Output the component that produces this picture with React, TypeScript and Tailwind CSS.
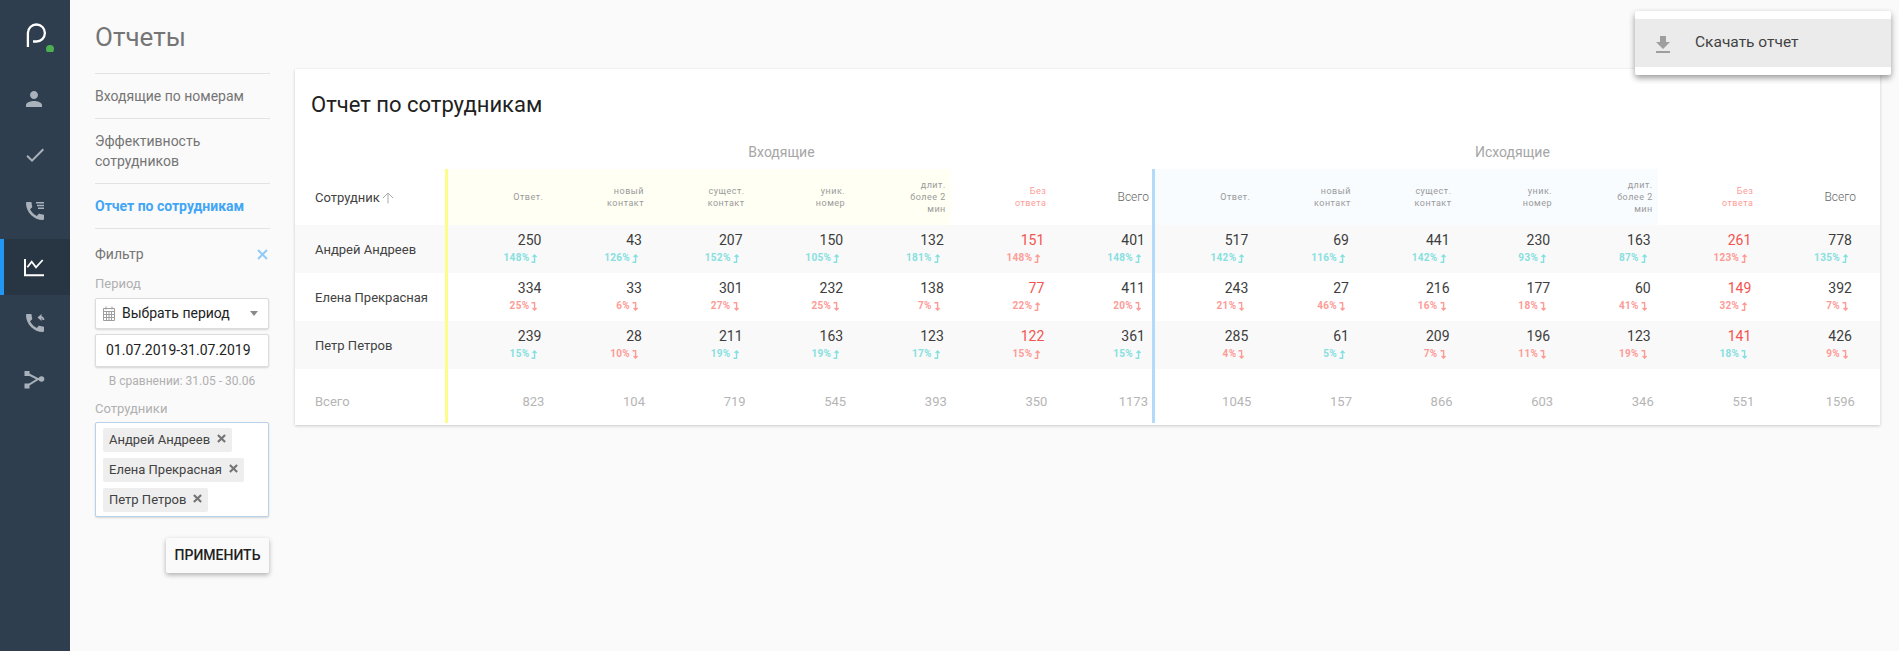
import React from "react";

type Cell = [string, string, boolean, boolean?, boolean?];

const inbound: Cell[][] = [
  [["250", "148%", true], ["43", "126%", true], ["207", "152%", true], ["150", "105%", true], ["132", "181%", true], ["151", "148%", true, true], ["401", "148%", true]],
  [["334", "25%", false], ["33", "6%", false], ["301", "27%", false], ["232", "25%", false], ["138", "7%", false], ["77", "22%", true, true], ["411", "20%", false]],
  [["239", "15%", true], ["28", "10%", false], ["211", "19%", true], ["163", "19%", true], ["123", "17%", true], ["122", "15%", true, true], ["361", "15%", true]],
];
const outbound: Cell[][] = [
  [["517", "142%", true], ["69", "116%", true], ["441", "142%", true], ["230", "93%", true], ["163", "87%", true], ["261", "123%", true, true], ["778", "135%", true]],
  [["243", "21%", false], ["27", "46%", false], ["216", "16%", false], ["177", "18%", false], ["60", "41%", false], ["149", "32%", true, true], ["392", "7%", false]],
  [["285", "4%", false], ["61", "5%", true], ["209", "7%", false], ["196", "11%", false], ["123", "19%", false], ["141", "18%", false, true, true], ["426", "9%", false]],
];
const names = ["Андрей Андреев", "Елена Прекрасная", "Петр Петров"];
const totalsIn = ["823", "104", "719", "545", "393", "350", "1173"];
const totalsOut = ["1045", "157", "866", "603", "346", "551", "1596"];
const headers = [["Ответ."], ["новый", "контакт"], ["сущест.", "контакт"], ["уник.", "номер"], ["длит.", "более 2", "мин"]];

const GRID = "grid grid-cols-[150px_103.4px_repeat(6,100.6px)_103.4px_repeat(6,100.6px)]";

function Trend({ up }: { up: boolean }) {
  return (
    <svg width="7" height="9" viewBox="0 0 7 9" className="ml-[2px] inline-block" fill="none" stroke="currentColor" strokeWidth="1.4">
      {up ? <path d="M0.5 8.3H3.6V1.5M1.6 3L3.6 1L5.6 3" /> : <path d="M0.5 0.7H3.6V7.5M1.6 6L3.6 8L5.6 6" />}
    </svg>
  );
}

function ValueCell({ c, first, bar }: { c: Cell; first?: boolean; bar?: string }) {
  const [v, p, up, redVal, forceTeal] = c;
  const red = !forceTeal && (!up || redVal === true);
  return (
    <div className={`flex flex-col items-end pt-[5px] pr-[7px] ${first ? `border-l-[3px] ${bar}` : ""}`}>
      <div className={`text-[14px] leading-[20px] ${redVal ? "text-[#f4544f]" : "text-[#3d3d3d]"}`}>{v}</div>
      <div className={`mt-[1px] flex items-center pr-[3px] text-[10px] leading-[14px] font-bold tracking-[0.3px] ${red ? "text-[#fd9c97]" : "text-[#87e0e0]"}`}>
        {p}
        <Trend up={up} />
      </div>
    </div>
  );
}

function Head({ lines, tint, first, bar }: { lines: string[]; tint: string; first?: boolean; bar?: string }) {
  return (
    <div className={`flex flex-col items-end justify-center pr-[5px] text-[9px] leading-[12px] tracking-[0.5px] text-[#9a9a9a] ${tint} ${first ? `border-l-[3px] ${bar}` : ""}`}>
      {lines.map((l) => (
        <div key={l}>{l}</div>
      ))}
    </div>
  );
}

function HeadGroup({ tint, bar }: { tint: string; bar: string }) {
  return (
    <>
      {headers.map((h, i) => (
        <Head key={i} lines={h} tint={tint} first={i === 0} bar={bar} />
      ))}
      <div className="flex flex-col items-end justify-center pr-[5px] text-[9px] leading-[12px] tracking-[0.5px] text-[#fd9c97]">
        <div>Без</div>
        <div>ответа</div>
      </div>
      <div className="flex items-center justify-end pr-[3px] text-[12px] font-light text-[#666666]">Всего</div>
    </>
  );
}

const Ic = ({ d }: { d: string }) => (
  <svg width="24" height="24" viewBox="0 0 24 24" fill="#a9b1ba">
    <path d={d} />
  </svg>
);

const PHONE = "M20.01 15.38c-1.23 0-2.42-.2-3.53-.56-.35-.12-.74-.03-1.01.24l-1.57 1.97c-2.83-1.35-5.48-3.9-6.89-6.83l1.95-1.66c.27-.28.35-.67.24-1.02-.37-1.11-.56-2.3-.56-3.53 0-.54-.45-.99-.99-.99H4.19C3.65 3 3 3.24 3 3.99 3 13.28 10.73 21 20.01 21c.71 0 .99-.63.99-1.18v-3.45c0-.54-.45-.99-.99-.99z";

function Sidebar() {
  return (
    <aside className="flex w-[70px] shrink-0 flex-col bg-[#2f3e4e]">
      <div className="flex h-[71px] items-start justify-center pt-[20px]">
        <svg width="40" height="32" viewBox="0 0 40 32" fill="none">
          <path d="M12.9 27V13A8.5 8.5 0 1 1 21.3 21.5H18" stroke="#ffffff" strokeWidth="2.3" />
          <circle cx="35" cy="29" r="4" fill="#4caf50" />
        </svg>
      </div>
      <div className="flex h-[56px] items-center justify-center pr-[2px]">
        <Ic d="M12 12c2.21 0 4-1.79 4-4s-1.79-4-4-4-4 1.79-4 4 1.79 4 4 4zm0 2c-2.67 0-8 1.34-8 4v2h16v-2c0-2.66-5.33-4-8-4z" />
      </div>
      <div className="flex h-[56px] items-center justify-center">
        <Ic d="M9 16.17L4.83 12l-1.42 1.41L9 19 21 7l-1.41-1.41z" />
      </div>
      <div className="flex h-[56px] items-center justify-center pr-[1px]">
        <svg width="24" height="24" viewBox="0 0 24 24" fill="#a9b1ba">
          <path d={PHONE} />
          <path d="M13 3h8v1.6h-8zM14 5.7h7v1.6h-7zM15 8.4h6V10h-6z" />
        </svg>
      </div>
      <div className="flex h-[56px] items-center border-l-[4px] border-[#2196f3] bg-[#283644] pl-[18px]">
        <svg width="24" height="24" viewBox="0 0 24 24" fill="none" stroke="#ffffff" strokeWidth="2">
          <path d="M3 4v16.2h19" />
          <path d="M5.3 12.3l4.4-5.6 4.3 5.6L20.7 5" strokeWidth="1.8" />
        </svg>
      </div>
      <div className="flex h-[56px] items-center justify-center pr-[1px]">
        <svg width="24" height="24" viewBox="0 0 24 24" fill="#a9b1ba">
          <path d={PHONE} />
          <path d="M14.5 6.5L18.5 3v2.3c1.8.3 2.8 1.6 2.8 3.7h-1.9c0-1.2-.3-1.8-.9-1.9V10z" />
        </svg>
      </div>
      <div className="flex h-[56px] items-center justify-center">
        <svg width="24" height="24" viewBox="0 0 24 24" fill="#a9b1ba" stroke="#a9b1ba">
          <path d="M4 6.5L15 12L4 19M15 12h3" fill="none" strokeWidth="2" />
          <rect x="1.5" y="4" width="5" height="5" strokeWidth="0" />
          <rect x="1.5" y="16.5" width="5" height="5" strokeWidth="0" />
          <circle cx="18.5" cy="12" r="2.8" strokeWidth="0" />
        </svg>
      </div>
    </aside>
  );
}

function Chip({ label }: { label: string }) {
  return (
    <div className="flex h-[24px] items-center rounded-[2px] bg-[#eeeeee] pr-[6px] pl-[6px] text-[13px] text-[#424242]">
      {label}
      <svg width="9" height="9" viewBox="0 0 10 10" className="mb-[4px] ml-[7px]" stroke="#757575" strokeWidth="2.4">
        <path d="M1 1l8 8M9 1l-8 8" />
      </svg>
    </div>
  );
}

function Filters() {
  return (
    <nav className="mt-[4px] w-[175px] shrink-0 text-[14px] text-[#757575]">
      <div className="border-y border-[#e3e3e3] py-[14px] leading-[16px]">Входящие по номерам</div>
      <div className="border-b border-[#e3e3e3] py-[12px] leading-[20px]">
        Эффективность
        <br />
        сотрудников
      </div>
      <div className="border-b border-[#e3e3e3] py-[14px] leading-[16px] font-bold text-[#42a5f5]">Отчет по сотрудникам</div>
      <div className="mt-[16px] flex items-center justify-between pr-[2px] leading-[18px]">
        <span>Фильтр</span>
        <svg width="11" height="11" viewBox="0 0 11 11" stroke="#90caf9" strokeWidth="2">
          <path d="M1 1l9 9M10 1l-9 9" />
        </svg>
      </div>
      <div className="mt-[14px] text-[13px] leading-[14px] text-[#b0b0b0]">Период</div>
      <div className="mt-[7px] flex h-[31px] w-[174px] items-center rounded-[2px] border border-[#dcdcdc] bg-white pr-[10px] pl-[6px] text-[14px] text-[#222222] shadow-[0_1px_2px_rgba(0,0,0,0.15)]">
        <svg width="14" height="15" viewBox="0 0 14 15" fill="none" stroke="#9e9e9e" strokeWidth="1">
          <path d="M1.5 2.5h11v12h-11zM1.5 5.5h11M1.5 8.5h11M1.5 11.5h11M4.5 5.5v9M7 5.5v9M9.5 5.5v9M4 0.5v3M10 0.5v3" />
        </svg>
        <span className="ml-[6px] flex-1">Выбрать период</span>
        <svg width="8" height="5" viewBox="0 0 8 5" fill="#8a8a8a">
          <path d="M0 0h8L4 5z" />
        </svg>
      </div>
      <div className="mt-[5px] flex h-[33px] w-[174px] items-center rounded-[2px] border border-[#dcdcdc] bg-white pl-[10px] text-[14px] text-[#222222] shadow-[0_1px_2px_rgba(0,0,0,0.15)]">
        01.07.2019-31.07.2019
      </div>
      <div className="mt-[7px] w-[174px] text-center text-[12px] leading-[14px] text-[#b0b0b0]">В сравнении: 31.05 - 30.06</div>
      <div className="mt-[14px] text-[13px] leading-[14px] text-[#b0b0b0]">Сотрудники</div>
      <div className="mt-[6px] flex h-[95px] w-[174px] flex-col items-start gap-[6px] rounded-[2px] border border-[#b9d3ea] bg-white pt-[5px] pl-[7px] shadow-[0_1px_2px_rgba(0,0,0,0.15)]">
        {names.map((n) => (
          <Chip key={n} label={n} />
        ))}
      </div>
      <div className="mt-[21px] flex justify-end">
        <button className="mr-[1px] h-[35px] w-[103px] rounded-[2px] bg-[#fafafa] text-[14px] font-medium text-[#212121] shadow-[0_2px_5px_rgba(0,0,0,0.3)]">
          ПРИМЕНИТЬ
        </button>
      </div>
    </nav>
  );
}

function Report() {
  const rowBgs = ["bg-[#f9f9f9]", "bg-white", "bg-[#f9f9f9]"];
  return (
    <section className="ml-[25px] h-[356px] w-[1585px] shrink-0 bg-white shadow-[0_1px_3px_rgba(0,0,0,0.2)]">
      <h2 className="pt-[21px] pl-[16px] text-[22px] leading-[30px] text-[#212121]">Отчет по сотрудникам</h2>
      <div className={`${GRID} mt-[12px] h-[37px] items-center pt-[3px] text-[14px] text-[#a6a6a6]`}>
        <div />
        <div className="col-span-7 pr-[34px] text-center">Входящие</div>
        <div className="col-span-7 pl-[14px] text-center">Исходящие</div>
      </div>
      <div className={`${GRID} h-[56px]`}>
        <div className="flex items-center pt-[2px] pl-[20px] text-[13px] text-[#424242]">
          Сотрудник
          <svg width="12" height="12" viewBox="0 0 12 12" fill="none" stroke="#ababab" strokeWidth="1" className="ml-[2px]">
            <path d="M6 11.5V1M1 6l5-5 5 5" />
          </svg>
        </div>
        <HeadGroup tint="bg-[#fffff3]" bar="border-[#fdfd8a]" />
        <HeadGroup tint="bg-[#f8fcff]" bar="border-[#b3dbf9]" />
      </div>
      {names.map((n, i) => (
        <div key={n} className={`${GRID} h-[48px] ${rowBgs[i]}`}>
          <div className="flex items-center pt-[2px] pl-[20px] text-[13px] text-[#424242]">{n}</div>
          {inbound[i].map((c, j) => (
            <ValueCell key={j} c={c} first={j === 0} bar="border-[#fdfd8a]" />
          ))}
          {outbound[i].map((c, j) => (
            <ValueCell key={j} c={c} first={j === 0} bar="border-[#b3dbf9]" />
          ))}
        </div>
      ))}
      <div className={`${GRID} h-[54px] text-[13px] text-[#b5b5b5]`}>
        <div className="flex items-center pt-[12px] pl-[20px]">Всего</div>
        {totalsIn.map((t, j) => (
          <div key={j} className={`flex items-center justify-end pt-[12px] pr-[4px] ${j === 0 ? "border-l-[3px] border-[#fdfd8a]" : ""}`}>{t}</div>
        ))}
        {totalsOut.map((t, j) => (
          <div key={j} className={`flex items-center justify-end pt-[12px] pr-[4px] ${j === 0 ? "border-l-[3px] border-[#b3dbf9]" : ""}`}>{t}</div>
        ))}
      </div>
    </section>
  );
}

export default function App() {
  return (
    <div className="relative flex h-[651px] w-[1899px] overflow-hidden bg-[#fafafa] font-['Roboto',sans-serif]">
      <Sidebar />
      <main className="flex-1 pl-[25px]">
        <h1 className="pt-[21px] text-[26px] leading-[32px] font-normal text-[#757575]">Отчеты</h1>
        <div className="mt-[16px] flex items-start">
          <Filters />
          <Report />
        </div>
      </main>
      <div className="absolute top-[11px] left-[1635px] w-[256px] rounded-[2px] bg-white py-[8px] shadow-[0_3px_6px_rgba(0,0,0,0.4)]">
        <div className="flex h-[48px] items-center bg-[#ebebeb] pl-[16px] text-[15.5px] text-[#424242]">
          <svg width="24" height="24" viewBox="0 0 24 24" fill="#9e9e9e" className="mt-[4px]">
            <path d="M19 9h-4V3H9v6H5l7 7 7-7zM5 18v2h14v-2H5z" />
          </svg>
          <span className="ml-[20px]">Скачать отчет</span>
        </div>
      </div>
    </div>
  );
}
